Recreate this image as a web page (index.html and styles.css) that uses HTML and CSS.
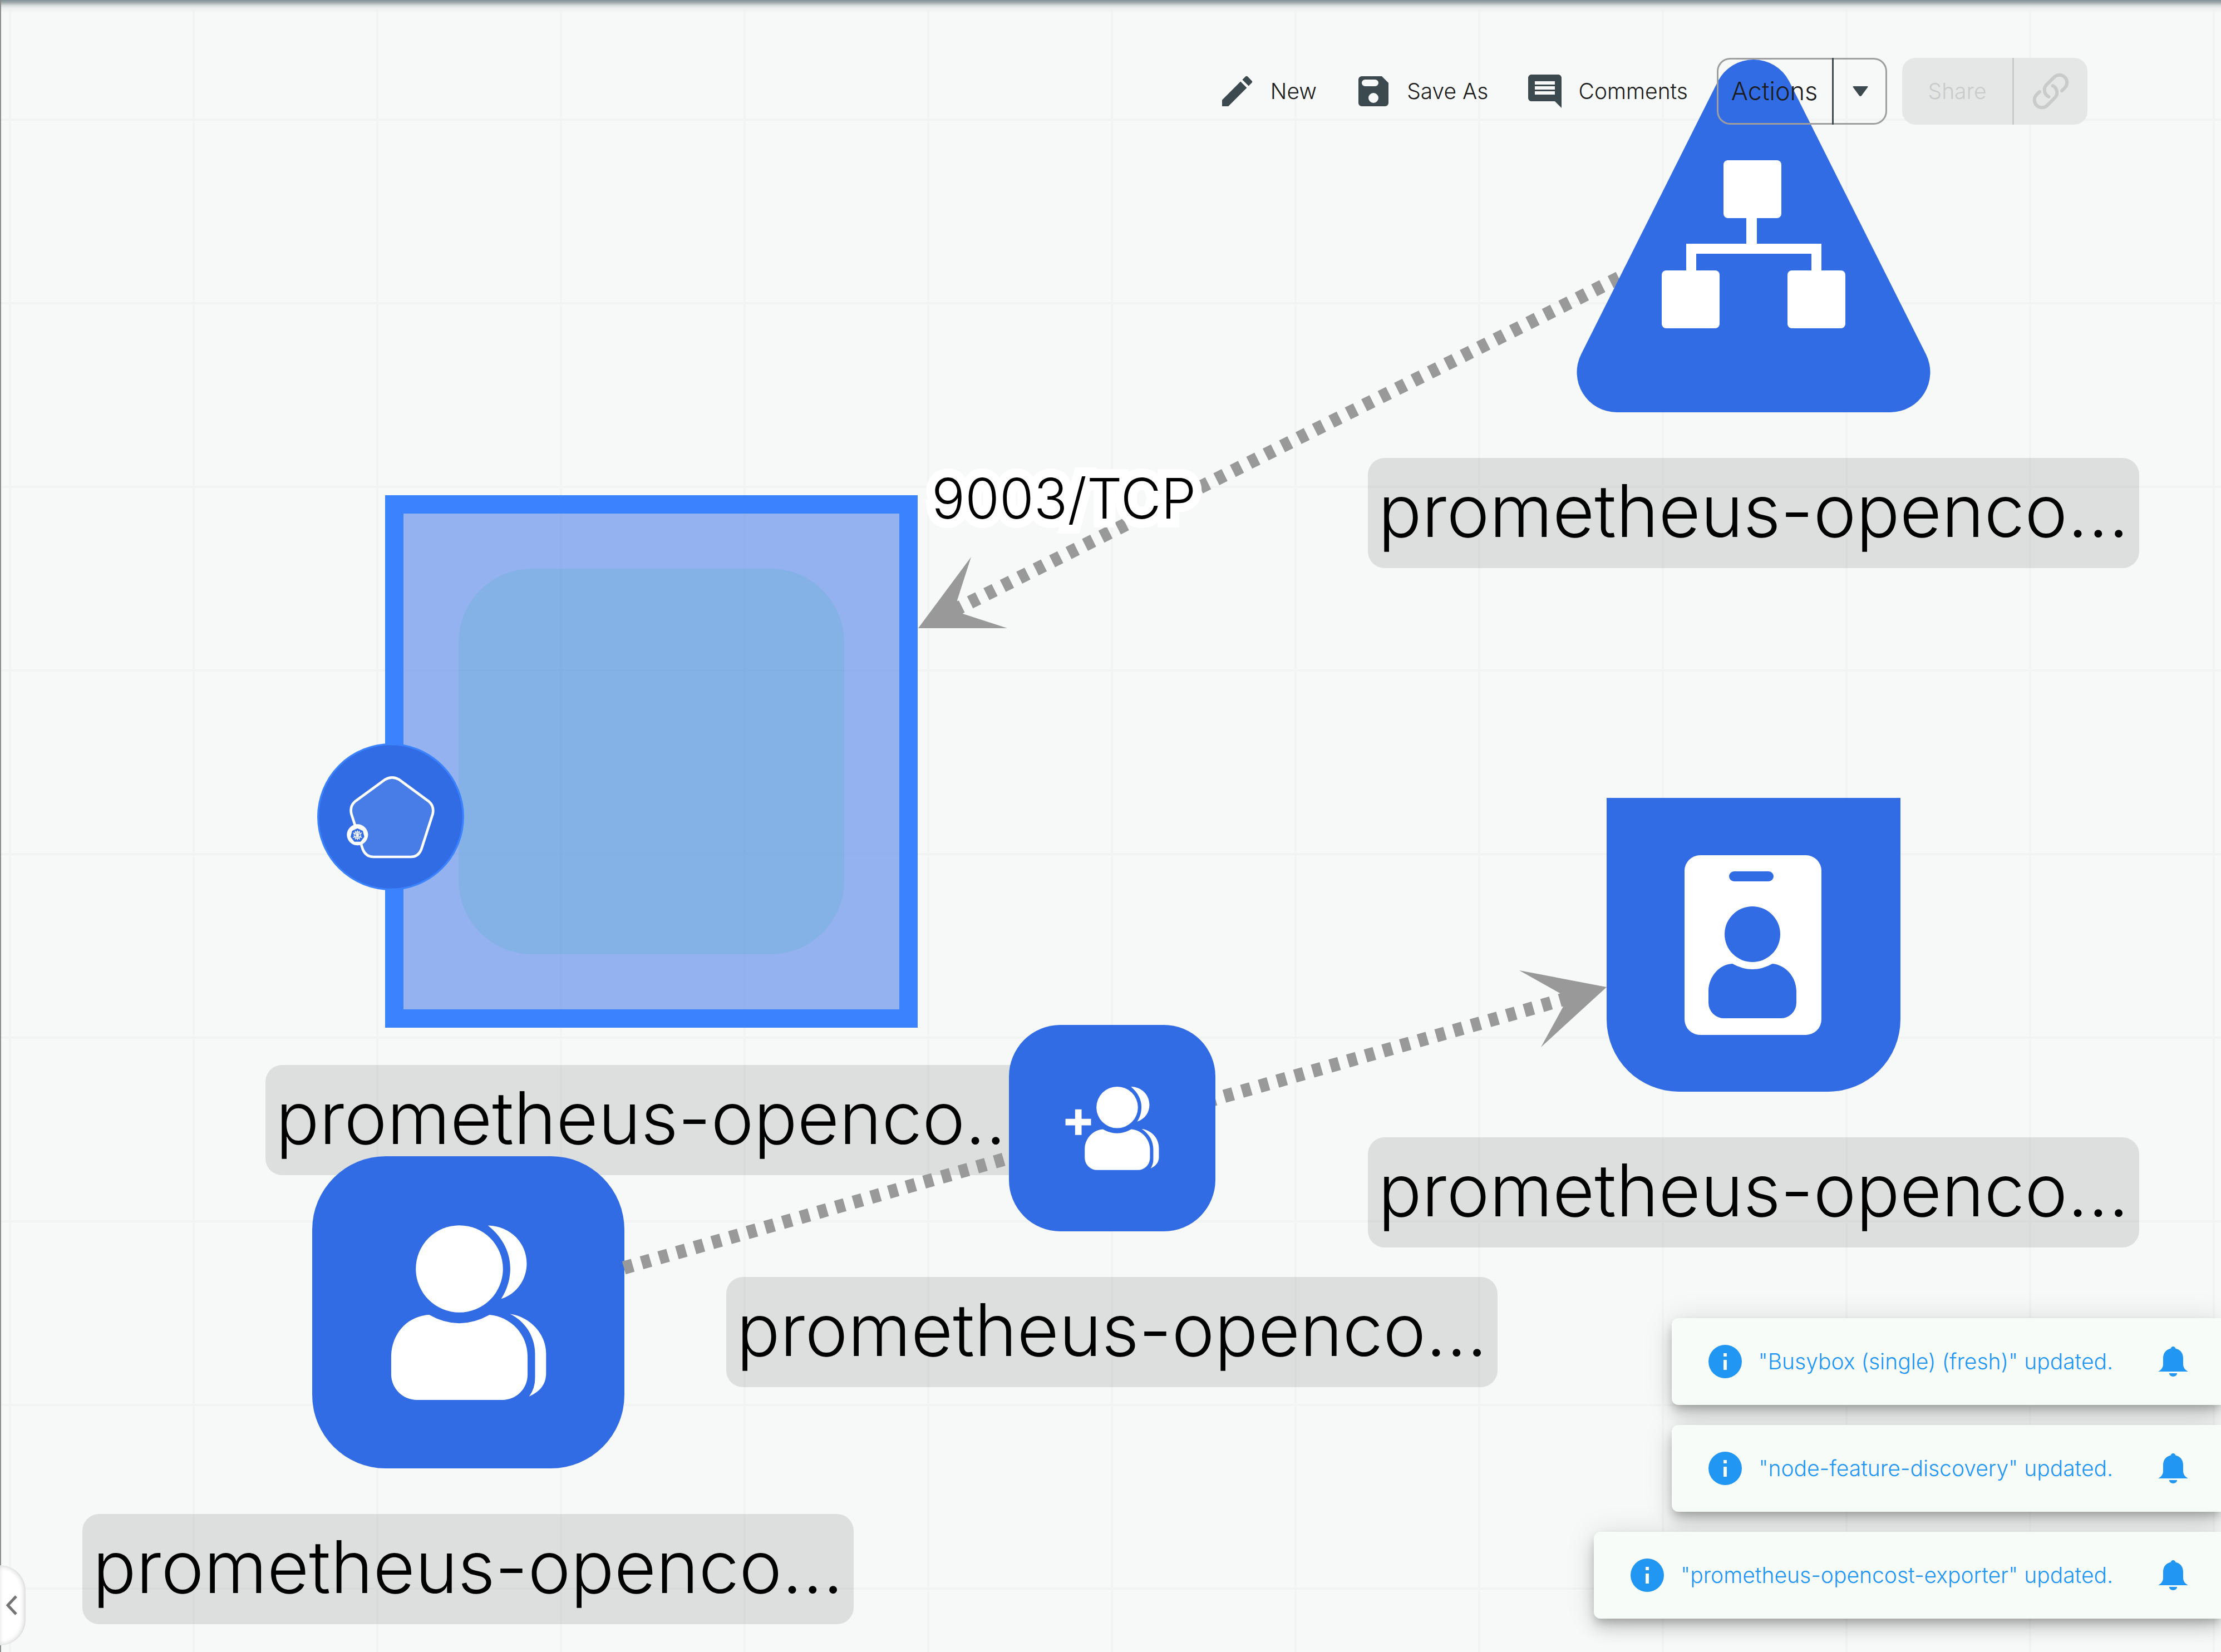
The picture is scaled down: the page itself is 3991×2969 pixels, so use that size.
FILE: index.html
```html
<!DOCTYPE html>
<html lang="en">
<head>
<meta charset="utf-8">
<title>Design canvas</title>
<link rel="stylesheet" href="styles.css">
</head>
<body>
<main class="canvas">
  <figure class="node node-pod">
    <div class="pod-frame">
      <div class="pod-inner"></div>
      <svg class="pod-badge" viewBox="91 108 792 792" aria-hidden="true">
        <circle cx="487" cy="504" r="391" fill="#326ce5" stroke="#3b82ff" stroke-width="10"/>
        <path d="M455 304Q495 280 534 304L694 422Q722 446 714 488L652 680Q636 720 596 720H394Q354 720 337 680L275 488Q266 446 294 422Z" fill="#487de8" stroke="#fff" stroke-width="14"/>
        <circle cx="308" cy="601" r="57" fill="#fff"/>
        <path d="M308 566L337 580L345 612L325 638H291L271 612L279 580Z" fill="#326ce5"/>
        <g fill="none" stroke="#fff" stroke-width="4">
          <circle cx="308" cy="603" r="18"/>
          <path d="M308 577V629M284 590L332 616M284 616L332 590M295 580L320 626M320 580L295 626"/>
        </g>
      </svg>
    </div>
    <figcaption class="label">prometheus-openco...</figcaption>
  </figure>

  <figure class="node node-group">
    <svg class="shape-group" viewBox="52 70 1419 1419" aria-hidden="true">
      <rect x="52" y="70" width="1419" height="1419" rx="334" fill="#326ce5"/>
      <g fill="#fff">
        <circle cx="721" cy="582" r="198"/>
        <path d="M851 385C955 388 1027 465 1027 558C1027 635 975 700 911 718C968 630 981 490 851 385Z"/>
        <path d="M584 791Q720 868 858 791C955 800 1031 880 1031 980V1063A115 115 0 0 1 916 1178H528A117 117 0 0 1 411 1063V976C415 870 490 795 584 791Z"/>
        <path d="M951 787C1045 800 1115 880 1115 965V1063Q1112 1130 1038 1162Q1066 1125 1065 1075V968C1065 890 1020 820 951 787Z"/>
      </g>
    </svg>
    <figcaption class="label">prometheus-openco...</figcaption>
  </figure>

  <svg class="edges" aria-hidden="true">
    <g stroke="#999" stroke-width="24" stroke-dasharray="16.5 16.5">
      <line x1="1713.5" y1="1097.3" x2="2950" y2="479"/>
      <line x1="2818.7" y1="1793.5" x2="1110" y2="2281.8"/>
    </g>
    <g fill="#999">
      <path d="M1650 1129L1745 1001L1720 1079L1730 1103L1810 1129Z"/>
      <path d="M2887 1774L2730 1744L2803 1785L2809 1809L2769 1882Z"/>
    </g>
  </svg>
  <span class="edge-label">9003/TCP</span>

  <figure class="node node-service">
    <svg class="shape-service" viewBox="2833 105 636 636" aria-hidden="true">
      <path d="M2841 637L3087 146A72 72 0 0 1 3215 146L3461 637A72 72 0 0 1 3397 741H2905A72 72 0 0 1 2841 637Z" fill="#326ce5"/>
      <g fill="#fff">
        <rect x="3097" y="288" width="104" height="104" rx="8"/>
        <rect x="2986" y="486" width="104" height="104" rx="8"/>
        <rect x="3212" y="486" width="104" height="104" rx="8"/>
        <path d="M3138 388H3157V438H3273V490H3255V456H3048V490H3030V438H3138Z"/>
      </g>
    </svg>
    <figcaption class="label">prometheus-openco...</figcaption>
  </figure>

  <figure class="node node-account">
    <svg class="shape-account" viewBox="2887 1434 528 528" aria-hidden="true">
      <path d="M2887 1434H3415V1832A130 130 0 0 1 3285 1962H3017A130 130 0 0 1 2887 1832Z" fill="#326ce5"/>
      <rect x="3027" y="1537" width="246" height="323" rx="28" fill="#fff"/>
      <g fill="#326ce5">
        <rect x="3107" y="1566" width="80" height="18" rx="9"/>
        <circle cx="3149" cy="1679" r="50"/>
        <path d="M3113 1732Q3149 1752 3185 1732C3208 1734 3228 1755 3228 1782V1802A28 28 0 0 1 3199 1830H3099A28 28 0 0 1 3070 1802V1780C3071 1754 3090 1733 3113 1732Z"/>
      </g>
    </svg>
    <figcaption class="label">prometheus-openco...</figcaption>
  </figure>

  <figure class="node node-binding">
    <svg class="shape-binding" viewBox="97 66 1114 1114" aria-hidden="true">
      <rect x="97" y="66" width="1114" height="1114" rx="278" fill="#326ce5"/>
      <g fill="#fff">
        <path d="M402 573H454V522H489V573H540V608H489V660H454V608H402Z"/>
        <circle cx="681" cy="511" r="112"/>
        <path d="M755 399C815 400 855 445 855 497C855 540 830 574 789 588C820 540 830 460 755 399Z"/>
        <path d="M604 629Q680 673 757 629C812 632 858 682 858 738V784A65 65 0 0 1 792 849H573A66 66 0 0 1 506 784V730C508 680 550 632 604 629Z"/>
        <path d="M813 627C870 635 906 680 906 730V784Q903 822 862 840Q877 815 876 790V738C876 690 850 650 813 627Z"/>
      </g>
    </svg>
    <figcaption class="label">prometheus-openco...</figcaption>
  </figure>
</main>

<header class="toolbar">
  <button class="tool" type="button">
    <svg class="icon" viewBox="0 0 24 24" aria-hidden="true"><path d="M3 17.25V21h3.75L17.81 9.94l-3.75-3.75L3 17.25zM20.71 7.04a1 1 0 0 0 0-1.41l-2.34-2.34a1 1 0 0 0-1.41 0l-1.83 1.83 3.75 3.75 1.83-1.83z"/></svg>
    New
  </button>
  <button class="tool" type="button">
    <svg class="icon" viewBox="0 0 24 24" aria-hidden="true"><path fill-rule="evenodd" d="M17 3H5a2 2 0 0 0-2 2v14a2 2 0 0 0 2 2h14a2 2 0 0 0 2-2V7l-4-4zM12 19a3 3 0 1 1 0-6 3 3 0 0 1 0 6zM7 5h6a2 2 0 0 1 0 4H7a2 2 0 0 1 0-4z"/></svg>
    Save As
  </button>
  <button class="tool" type="button">
    <svg class="icon" viewBox="0 0 24 24" aria-hidden="true"><path d="M21.99 4c0-1.1-.89-2-1.99-2H4c-1.1 0-2 .9-2 2v12c0 1.1.9 2 2 2h14l4 4-.01-18zM18 14H6v-2h12v2zm0-3H6V9h12v2zm0-3H6V6h12v2z"/></svg>
    Comments
  </button>
  <div class="split actions">
    <button class="split-main" type="button">Actions</button>
    <button class="split-side" type="button" aria-label="More actions">
      <svg class="caret" viewBox="0 0 28 18" aria-hidden="true"><path d="M1 0H27Q28 1 27 2L16 17Q14 19 12 17L1 2Q0 1 1 0Z"/></svg>
    </button>
  </div>
  <div class="split share">
    <button class="split-main" type="button" disabled>Share</button>
    <button class="split-side" type="button" aria-label="Copy link" disabled>
      <svg class="link-icon" viewBox="0 0 24 24" aria-hidden="true"><path d="M13.19 8.688a4.5 4.5 0 0 1 1.242 7.244l-4.5 4.5a4.5 4.5 0 0 1-6.364-6.364l1.757-1.757m13.35-.622 1.757-1.757a4.5 4.5 0 0 0-6.364-6.364l-4.5 4.5a4.5 4.5 0 0 0 1.242 7.244"/></svg>
    </button>
  </div>
</header>

<button class="drawer-handle" type="button" aria-label="Open panel">
  <svg class="chevron" viewBox="0 0 22 36" aria-hidden="true"><path d="M19 2L4 18L19 34"/></svg>
</button>

<section class="toasts" aria-label="Notifications">
  <div class="toast">
    <svg class="icon" viewBox="0 0 24 24" aria-hidden="true"><path d="M12 2a10 10 0 1 0 0 20 10 10 0 0 0 0-20zm1 15h-2v-6h2v6zm0-8h-2V7h2v2z"/></svg>
    <p class="toast-text">"Busybox (single) (fresh)" updated.</p>
    <button class="bell" type="button" aria-label="Notifications"><svg class="icon" viewBox="0 0 24 24" aria-hidden="true"><path d="M12 3c.8 0 1.300.5 1.400 1.200C16.300 4.900 18 7 18 10v3.500c0 2 1 3.500 3 4.500H3c2-1 3-2.500 3-4.500V10c0-3 1.700-5.100 4.600-5.800C10.700 3.500 11.200 3 12 3zM9.600 19h4.800a2.400 2 0 0 1-4.800 0z"/></svg></button>
  </div>
  <div class="toast">
    <svg class="icon" viewBox="0 0 24 24" aria-hidden="true"><path d="M12 2a10 10 0 1 0 0 20 10 10 0 0 0 0-20zm1 15h-2v-6h2v6zm0-8h-2V7h2v2z"/></svg>
    <p class="toast-text">"node-feature-discovery" updated.</p>
    <button class="bell" type="button" aria-label="Notifications"><svg class="icon" viewBox="0 0 24 24" aria-hidden="true"><path d="M12 3c.8 0 1.300.5 1.400 1.200C16.300 4.900 18 7 18 10v3.500c0 2 1 3.500 3 4.500H3c2-1 3-2.500 3-4.500V10c0-3 1.700-5.100 4.600-5.800C10.700 3.500 11.200 3 12 3zM9.600 19h4.800a2.400 2 0 0 1-4.800 0z"/></svg></button>
  </div>
  <div class="toast">
    <svg class="icon" viewBox="0 0 24 24" aria-hidden="true"><path d="M12 2a10 10 0 1 0 0 20 10 10 0 0 0 0-20zm1 15h-2v-6h2v6zm0-8h-2V7h2v2z"/></svg>
    <p class="toast-text">"prometheus-opencost-exporter" updated.</p>
    <button class="bell" type="button" aria-label="Notifications"><svg class="icon" viewBox="0 0 24 24" aria-hidden="true"><path d="M12 3c.8 0 1.300.5 1.400 1.200C16.300 4.900 18 7 18 10v3.500c0 2 1 3.500 3 4.500H3c2-1 3-2.500 3-4.500V10c0-3 1.700-5.100 4.600-5.800C10.700 3.500 11.200 3 12 3zM9.600 19h4.800a2.400 2 0 0 1-4.800 0z"/></svg></button>
  </div>
</section>
</body>
</html>
```
FILE: styles.css
```css
* { box-sizing: border-box; }

body {
  margin: 0;
  min-height: 100vh;
  overflow: hidden;
  display: flex;
  flex-direction: column;
  justify-content: space-between;
  position: relative;
  font-family: Inter, "Liberation Sans", sans-serif;
  font-weight: 300;
  font-size: 39px;
  line-height: 48px;
  color: #1c1c1c;
  background-color: #f7f9f8;
  background-image:
    linear-gradient(90deg, #f2f4f4 4px, transparent 4px),
    linear-gradient(#f2f4f4 4px, transparent 4px);
  background-size: 330px 330px;
  background-position: 16px 213px;
}

button {
  margin: 0;
  padding: 0;
  border: 0;
  background: none;
  font: inherit;
  color: inherit;
}

/* Free canvas: nodes are placed by their graph position */
.canvas {
  position: absolute;
  inset: 0;
  overflow: hidden;
  border-left: 2px solid #8c8c8c;
}

.canvas::before {
  content: "";
  position: absolute;
  inset: 0 0 auto 0;
  height: 24px;
  background: linear-gradient(#7f9196, #a4acae 5px, #dadddd 10px, #eef0f0 15px, transparent);
}

.node {
  position: absolute;
  margin: 0 0 0 -2px;
  width: 1386px;
  display: flex;
  flex-direction: column;
  align-items: center;
  gap: 82px;
}

.node-pod { left: 477px; top: 890px; gap: 67px; }
.node-group { left: 148px; top: 2078px; }
.node-service { left: 2458px; top: 105px; }
.node-account { left: 2458px; top: 1434px; }
.node-binding { left: 1305px; top: 1842px; }

.label {
  width: 100%;
  height: 198px;
  border-radius: 30px;
  background: rgba(0, 0, 0, .1);
  color: #000;
  font-size: 130px;
  line-height: 190px;
  text-align: center;
  white-space: nowrap;
}

.pod-frame {
  position: relative;
  width: 957px;
  height: 957px;
  padding: 99px;
  border: 33px solid #3b82ff;
  background: rgba(50, 108, 229, .5);
  background-clip: padding-box;
}

.pod-inner {
  height: 100%;
  border-radius: 132px;
  background: rgba(0, 179, 159, .1);
}

.pod-badge {
  position: absolute;
  left: -155px;
  top: 413px;
  width: 264px;
  height: 264px;
}

.shape-group { width: 561px; height: 561px; }
.shape-service { width: 636px; height: 636px; }
.shape-account { width: 528px; height: 528px; }
.shape-binding { width: 371px; height: 371px; }

.edges {
  position: absolute;
  left: -2px;
  top: 0;
  width: 100%;
  height: 100%;
}

.edge-label {
  position: absolute;
  left: 1672px;
  top: 836px;
  color: #000;
  font-size: 100px;
  line-height: 120px;
  paint-order: stroke fill;
  -webkit-text-stroke: 32px #fff;
  stroke-linejoin: round;
}

.toolbar {
  position: relative;
  display: flex;
  justify-content: flex-end;
  align-items: center;
  padding: 104px 240px 0 0;
}

.tool {
  display: flex;
  align-items: center;
  gap: 24px;
  margin-right: 66px;
}

.tool:nth-of-type(3) { margin-right: 52px; }

.icon {
  display: block;
  width: 72px;
  height: 72px;
  fill: currentColor;
}

.tool .icon, .caret { fill: #3c494f; }

.split {
  display: flex;
  height: 120px;
  border-radius: 24px;
}

.split-main { border-right: 3px solid #3c494f; }

.split-side {
  flex: 1;
  display: flex;
  align-items: center;
  justify-content: center;
}

.actions {
  width: 306px;
  margin-right: 27px;
  box-shadow: inset 0 0 0 3px #9e9e9e;
  font-size: 45px;
}

.actions .split-main { width: 210px; }

.caret { width: 28px; height: 18px; }

.share {
  width: 333px;
  background: #e5e7e6;
  color: #c9cbca;
}

.share .split-main { width: 201px; border-color: #c9cbca; }

.link-icon {
  width: 72px;
  height: 72px;
  fill: none;
  stroke: #c9cbca;
  stroke-width: 2;
  stroke-linecap: round;
}

.drawer-handle {
  position: absolute;
  left: 0;
  bottom: 12px;
  width: 46px;
  height: 144px;
  padding-left: 10px;
  border-radius: 0 46px 46px 0;
  background: #fff;
  box-shadow: inset -2px 0 10px rgba(0, 0, 0, .2);
}

.chevron {
  display: block;
  width: 22px;
  height: 36px;
  fill: none;
  stroke: #757575;
  stroke-width: 5;
}

.toasts {
  position: relative;
  align-self: flex-end;
  display: flex;
  flex-direction: column;
  align-items: flex-end;
  gap: 36px;
  padding-bottom: 60px;
}

.toast {
  display: flex;
  align-items: center;
  height: 156px;
  padding: 0 50px 0 60px;
  border-radius: 12px 0 0 12px;
  background: #f8fcf9;
  color: #2196f3;
  box-shadow:
    0 9px 15px -3px rgba(0, 0, 0, .2),
    0 18px 30px rgba(0, 0, 0, .14),
    0 3px 54px rgba(0, 0, 0, .12);
}

.toast-text { margin: 0 72px 0 24px; }
```
